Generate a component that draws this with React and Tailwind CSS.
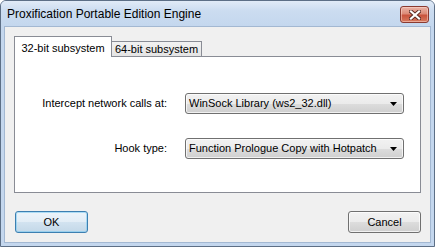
const FONT = "font-['Liberation_Sans',Arial,sans-serif]"

function Combo({ value }) {
  return (
    <div className="w-[219px] h-[21px] rounded-[3px] border border-[#707070] bg-[linear-gradient(to_bottom,#f2f2f2_0%,#ebebeb_50%,#dddddd_50%,#cfcfcf_100%)] flex items-center pl-[3px] pr-[6px] shadow-[inset_0_0_0_1px_rgba(255,255,255,0.7)]">
      <span className="flex-1 text-[11px] text-black leading-none">{value}</span>
      <svg width="7" height="4" viewBox="0 0 7 4">
        <path d="M0 0H7L3.5 4Z" fill="#000" />
      </svg>
    </div>
  )
}

function Button({ label, primary }) {
  return (
    <div
      className={
        primary
          ? 'w-[73px] h-[22px] rounded-[3px] border border-[#3c7fb1] bg-[linear-gradient(to_bottom,#edf4fa_0%,#e2edf6_50%,#d2e3f0_50%,#c3d8e8_100%)] shadow-[inset_0_0_0_1px_rgba(120,200,240,0.55)] flex items-center justify-center text-[11px] text-black'
          : 'w-[73px] h-[22px] rounded-[3px] border border-[#707070] bg-[linear-gradient(to_bottom,#f2f2f2_0%,#ebebeb_50%,#dddddd_50%,#cfcfcf_100%)] shadow-[inset_0_0_0_1px_rgba(255,255,255,0.7)] flex items-center justify-center text-[11px] text-black'
      }
    >
      {label}
    </div>
  )
}

export default function App() {
  return (
    <div className={`w-[435px] h-[247px] flex flex-col rounded-t-[6px] border border-[#5d6f86] bg-[#c4d7ee] ${FONT}`}>
      {/* title bar */}
      <div className="h-[25px] flex items-start justify-between pl-[6px] pr-[5px] rounded-t-[5px] bg-[linear-gradient(to_bottom,#e1ebf7_0%,#cbdcf0_40%,#c4d7ee_100%)]">
        <span className="mt-[6px] text-[12px] leading-[14px] text-black">Proxification Portable Edition Engine</span>
        <div className="mt-[5px] w-[29px] h-[17px] rounded-[3px] border border-[#8a3a30] bg-[linear-gradient(to_bottom,#eab3a6_0%,#dc8b78_45%,#c9533d_55%,#d67a5e_100%)] shadow-[inset_0_0_0_1px_rgba(255,220,210,0.5)] flex items-center justify-center">
          <svg width="12" height="10" viewBox="0 0 12 10">
            <path d="M2 1.5L10 8.5M10 1.5L2 8.5" stroke="#5a2a22" strokeWidth="4" strokeLinecap="square" />
            <path d="M2 1.5L10 8.5M10 1.5L2 8.5" stroke="#fff" strokeWidth="2.2" strokeLinecap="square" />
          </svg>
        </div>
      </div>

      {/* client area */}
      <div className="flex-1 mx-[3px] mb-[3px] border border-[#a3b8d2] bg-[#f0f0f0] flex flex-col pt-[9px] px-[9px]">
        <div className="flex items-end h-[20px]">
          <div className="relative z-10 w-[98px] h-[21px] -mb-px border border-b-0 border-[#898c95] bg-white flex justify-center pt-[3px] text-[11px] text-black">
            32-bit subsystem
          </div>
          <div className="w-[90px] h-[15px] border-t border-r border-[#898c95] bg-[linear-gradient(to_bottom,#f2f2f2,#e4e4e4)] flex justify-center items-center text-[11px] text-black">
            64-bit subsystem
          </div>
        </div>

        <div className="h-[137px] border border-[#898c95] bg-white flex flex-col pt-[36px] gap-[24px]">
          <div className="flex items-center">
            <span className="w-[152px] text-right text-[11px] text-black">Intercept network calls at:</span>
            <div className="ml-[18px]">
              <Combo value="WinSock Library (ws2_32.dll)" />
            </div>
          </div>
          <div className="flex items-center">
            <span className="w-[152px] text-right text-[11px] text-black">Hook type:</span>
            <div className="ml-[18px]">
              <Combo value="Function Prologue Copy with Hotpatch" />
            </div>
          </div>
        </div>

        <div className="flex justify-between mt-[18px] pl-px">
          <Button label="OK" primary />
          <Button label="Cancel" />
        </div>
      </div>
    </div>
  )
}
